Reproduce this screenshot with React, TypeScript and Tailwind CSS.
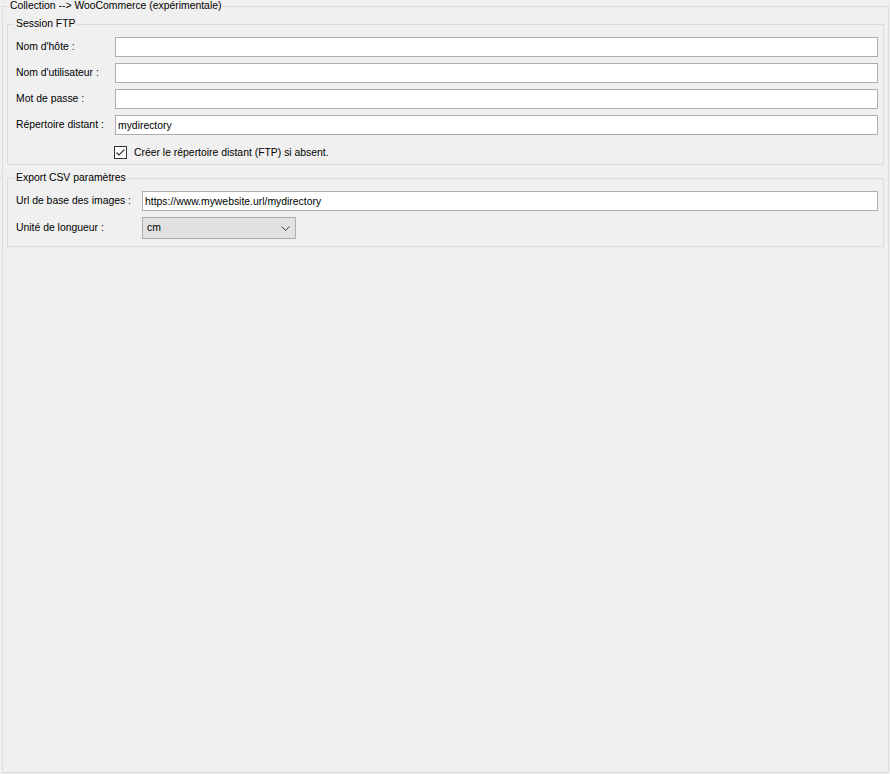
import React, { useState } from 'react';

const font = { fontFamily: '"Liberation Sans", Arial, sans-serif' };

const TextRow: React.FC<{ label: string; value?: string }> = ({ label, value = '' }) => (
    <div className="flex items-center h-[20px]">
        <span className="w-[99px] shrink-0 whitespace-nowrap">{label}</span>
        <input
            defaultValue={value}
            className="flex-1 h-[20px] min-w-0 bg-white border border-[#adadad] px-[2px] text-[10.4px] text-black outline-none"
        />
    </div>
);

const App: React.FC = () => {
    const [createDir, setCreateDir] = useState(true);

    return (
        <div className="w-[890px] h-[774px] bg-[#f0f0f0] text-[10.4px] text-black overflow-hidden" style={font}>
            <fieldset className="ml-[2px] mr-[1px] h-[773px] border border-[#dcdcdc] px-[4px] pb-0 pt-[6px]">
                <legend className="ml-[1px] px-[2px] leading-[12px]">Collection --&gt; WooCommerce (expérimentale)</legend>

                {/* Session FTP */}
                <fieldset className="border border-[#dcdcdc] pl-[8px] pr-[5px] pt-[7px] pb-[5px] h-[147px]">
                    <legend className="-ml-[2px] px-[2px] leading-[12px]">Session FTP</legend>
                    <div className="flex flex-col gap-[6px]">
                        <TextRow label="Nom d'hôte :" />
                        <TextRow label="Nom d'utilisateur :" />
                        <TextRow label="Mot de passe :" />
                        <TextRow label="Répertoire distant :" value="mydirectory" />
                        <label className="flex items-center gap-[7px] ml-[98px] mt-[5px] h-[13px] select-none">
                            <span
                                onClick={() => setCreateDir(!createDir)}
                                className="w-[13px] h-[13px] border border-[#333333] bg-white flex items-center justify-center"
                            >
                                {createDir && (
                                    <svg width="11" height="11" viewBox="0 0 11 11">
                                        <path d="M1.5 5.5 L4 8 L9.5 2.5" fill="none" stroke="#333333" strokeWidth="1.2" />
                                    </svg>
                                )}
                            </span>
                            <span>Créer le répertoire distant (FTP) si absent.</span>
                        </label>
                    </div>
                </fieldset>

                {/* Export CSV */}
                <fieldset className="mt-[7px] border border-[#dcdcdc] pl-[8px] pr-[5px] pt-[7px] pb-[5px] h-[75px]">
                    <legend className="-ml-[2px] px-[2px] leading-[12px]">Export CSV paramètres</legend>
                    <div className="flex flex-col gap-[6px]">
                        <div className="flex items-center h-[20px]">
                            <span className="w-[126px] shrink-0 whitespace-nowrap">Url de base des images :</span>
                            <input
                                defaultValue="https://www.mywebsite.url/mydirectory"
                                className="flex-1 h-[20px] min-w-0 bg-white border border-[#adadad] px-[2px] text-[10.4px] text-black outline-none"
                            />
                        </div>
                        <div className="flex items-center h-[22px]">
                            <span className="w-[126px] shrink-0 whitespace-nowrap">Unité de longueur :</span>
                            <div className="w-[154px] h-[22px] bg-[#e1e1e1] border border-[#adadad] flex items-center justify-between pl-[4px] pr-[5px]">
                                <span>cm</span>
                                <svg width="9" height="5" viewBox="0 0 9 5">
                                    <path d="M0.5 0.5 L4.5 4.5 L8.5 0.5" fill="none" stroke="#444444" strokeWidth="1" />
                                </svg>
                            </div>
                        </div>
                    </div>
                </fieldset>
            </fieldset>
        </div>
    );
};

export default App;
